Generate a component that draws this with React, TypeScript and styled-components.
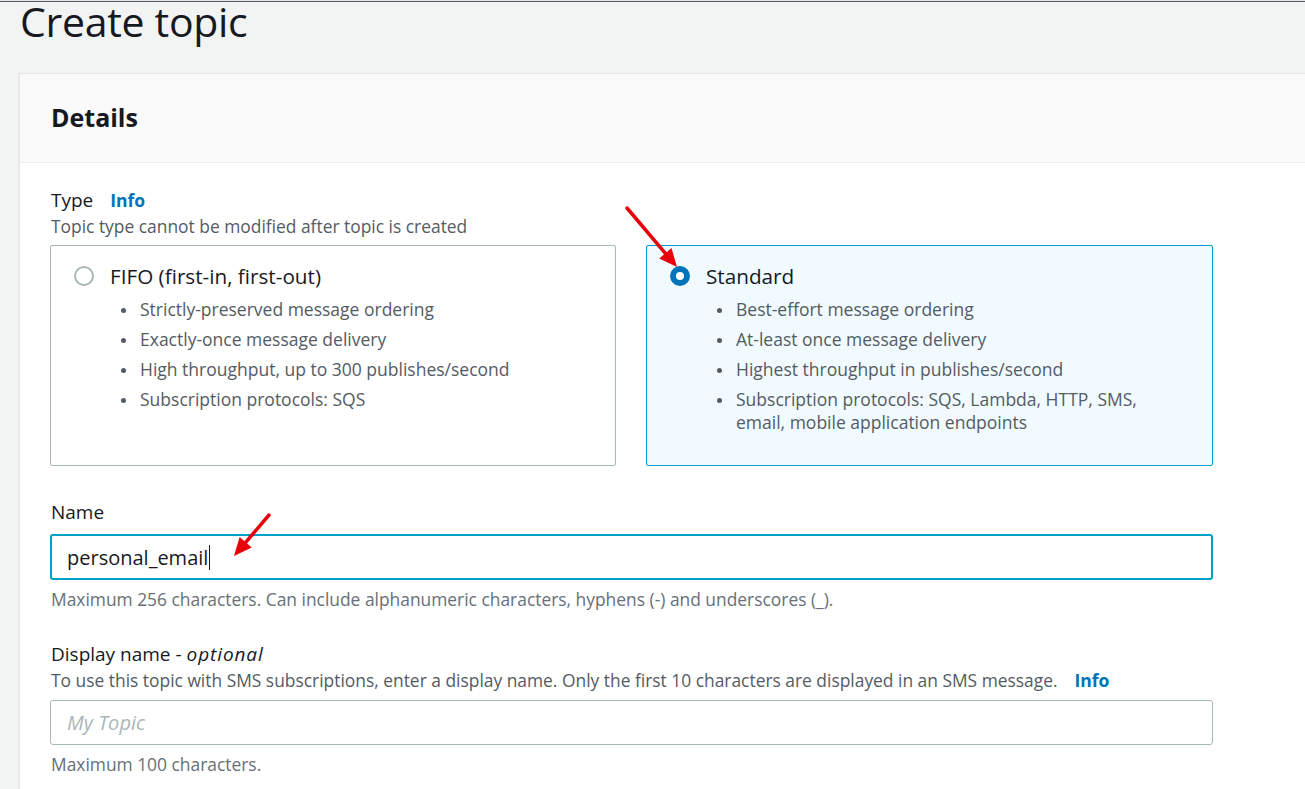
import React from "react";
import styled, { createGlobalStyle } from "styled-components";

const GlobalStyle = createGlobalStyle`
  html, body {
    margin: 0;
    padding: 0;
    background: #f2f3f3;
    overflow: hidden;
  }
  body {
    font-family: "Open Sans", "Noto Sans", Arial, sans-serif;
    color: #16191f;
  }
`;

const Page = styled.div`
  position: relative;
  width: 1305px;
  height: 789px;
  overflow: hidden;
  background: #f2f3f3;
`;

const TopRule = styled.div`
  height: 1px;
  background: #e4e4e4;
  border-bottom: 1px solid #545b64;
`;

const Title = styled.h1`
  margin: 0;
  padding: 0 0 0 20px;
  font-size: 41px;
  font-weight: 400;
  line-height: 38px;
  height: 38px;
  color: #16191f;
  letter-spacing: -0.3px;
  white-space: nowrap;
`;

const Panel = styled.section`
  margin: 33px -40px 0 19px;
  background: #ffffff;
  border: 1px solid #e3e6e6;
  box-shadow: 0 1px 1px rgba(0, 28, 36, 0.15);
`;

const PanelHeader = styled.div`
  background: #fafafa;
  border-bottom: 1px solid #eaeded;
  padding: 28px 30px 29px 31px;
`;

const PanelTitle = styled.h2`
  margin: 0;
  font-size: 25px;
  font-weight: 700;
  line-height: 31px;
  color: #16191f;
`;

const PanelBody = styled.div`
  padding: 25px 30px 40px 30px;
  width: 1163px;
`;

const Label = styled.div<{ $top?: number }>`
  font-size: 19px;
  line-height: 24px;
  height: 24px;
  margin-top: ${(p) => p.$top ?? 0}px;
  padding-left: 1px;
  color: #16191f;
  white-space: nowrap;
`;

const InfoLink = styled.span<{ $gap: number }>`
  color: #0073bb;
  font-weight: 700;
  font-size: 17.5px;
  margin-left: ${(p) => p.$gap}px;
`;

const Optional = styled.i`
  margin-left: 5px;
  letter-spacing: 0.9px;
`;

const Description = styled.div`
  font-size: 17.4px;
  line-height: 22px;
  height: 22px;
  margin-top: 3px;
  padding-left: 1px;
  color: #545b64;
  white-space: nowrap;
`;

const Tiles = styled.div`
  display: grid;
  grid-template-columns: 566px 567px;
  column-gap: 30px;
  margin-top: 8px;
`;

const Tile = styled.div<{ $selected?: boolean }>`
  box-sizing: border-box;
  height: 221px;
  border: 1px solid ${(p) => (p.$selected ? "#00a1c9" : "#aab7b8")};
  background: ${(p) => (p.$selected ? "#f1faff" : "#ffffff")};
  border-radius: 2px;
  padding: 17px 20px 0 23px;
`;

const TileHead = styled.div`
  display: flex;
  align-items: center;
  height: 26px;
`;

const Radio = styled.span<{ $checked?: boolean }>`
  box-sizing: border-box;
  width: 20px;
  height: 20px;
  border-radius: 50%;
  border: ${(p) => (p.$checked ? "6px solid #0073bb" : "2px solid #aab7b8")};
  background: #ffffff;
  flex: none;
`;

const TileLabel = styled.span`
  margin-left: 16px;
  font-size: 20.7px;
  line-height: 26px;
  color: #16191f;
`;

const Bullets = styled.ul`
  margin: 9px 0 0 0;
  padding: 0 0 0 66px;
  list-style: none;
`;

const Bullet = styled.li`
  position: relative;
  font-size: 17.5px;
  line-height: 23px;
  color: #545b64;
  margin-bottom: 7px;
  white-space: nowrap;
  &::before {
    content: "";
    position: absolute;
    left: -19px;
    top: 10px;
    width: 5px;
    height: 5px;
    border-radius: 50%;
    background: #545b64;
  }
`;

const InputBox = styled.div<{ $focused?: boolean }>`
  box-sizing: border-box;
  width: 1163px;
  height: ${(p) => (p.$focused ? 46 : 45)}px;
  margin-top: ${(p) => (p.$focused ? 10 : 9)}px;
  border: ${(p) => (p.$focused ? "2px solid #00a1c9" : "1px solid #aab7b8")};
  border-radius: 3px;
  background: #ffffff;
  display: flex;
  align-items: center;
  padding-left: ${(p) => (p.$focused ? 15 : 16)}px;
  font-size: 20px;
`;

const InputValue = styled.span`
  color: #16191f;
`;

const Caret = styled.span`
  display: inline-block;
  width: 1px;
  height: 25px;
  background: #16191f;
  margin-left: 1px;
`;

const Placeholder = styled.span`
  color: #aab7b8;
  font-style: italic;
`;

const Hint = styled.div`
  font-size: 17.4px;
  line-height: 20px;
  margin-top: 9px;
  padding-left: 1px;
  color: #687078;
  white-space: nowrap;
`;

const Overlay = styled.svg`
  position: absolute;
  left: 0;
  top: 0;
  pointer-events: none;
`;

function Arrow({ x1, y1, x2, y2 }: { x1: number; y1: number; x2: number; y2: number }) {
  const dx = x2 - x1;
  const dy = y2 - y1;
  const len = Math.hypot(dx, dy);
  const ux = dx / len;
  const uy = dy / len;
  const head = 18;
  const half = 8;
  const bx = x2 - ux * head;
  const by = y2 - uy * head;
  const p1 = `${bx - uy * half},${by + ux * half}`;
  const p2 = `${bx + uy * half},${by - ux * half}`;
  return (
    <g>
      <line x1={x1} y1={y1} x2={bx + ux * 2} y2={by + uy * 2} stroke="#e8000b" strokeWidth={3.5} strokeLinecap="round" />
      <polygon points={`${x2},${y2} ${p1} ${p2}`} fill="#e8000b" />
    </g>
  );
}

export default function App() {
  return (
    <Page>
      <GlobalStyle />
      <TopRule />
      <Title>Create topic</Title>
      <Panel>
        <PanelHeader>
          <PanelTitle>Details</PanelTitle>
        </PanelHeader>
        <PanelBody>
          <Label>
            Type<InfoLink $gap={17}>Info</InfoLink>
          </Label>
          <Description>Topic type cannot be modified after topic is created</Description>
          <Tiles>
            <Tile>
              <TileHead>
                <Radio />
                <TileLabel>FIFO (first-in, first-out)</TileLabel>
              </TileHead>
              <Bullets>
                <Bullet>Strictly-preserved message ordering</Bullet>
                <Bullet>Exactly-once message delivery</Bullet>
                <Bullet>High throughput, up to 300 publishes/second</Bullet>
                <Bullet>Subscription protocols: SQS</Bullet>
              </Bullets>
            </Tile>
            <Tile $selected>
              <TileHead>
                <Radio $checked />
                <TileLabel>Standard</TileLabel>
              </TileHead>
              <Bullets>
                <Bullet>Best-effort message ordering</Bullet>
                <Bullet>At-least once message delivery</Bullet>
                <Bullet>Highest throughput in publishes/second</Bullet>
                <Bullet>
                  Subscription protocols: SQS, Lambda, HTTP, SMS,
                  <br />
                  email, mobile application endpoints
                </Bullet>
              </Bullets>
            </Tile>
          </Tiles>
          <Label $top={34}>Name</Label>
          <InputBox $focused>
            <InputValue>personal_email</InputValue>
            <Caret />
          </InputBox>
          <Hint>
            Maximum 256 characters. Can include alphanumeric characters, hyphens (-) and underscores (_).
          </Hint>
          <Label $top={33}>
            Display name -<Optional>optional</Optional>
          </Label>
          <Description>
            To use this topic with SMS subscriptions, enter a display name. Only the first 10 characters are
            displayed in an SMS message.
            <InfoLink $gap={17}>Info</InfoLink>
          </Description>
          <InputBox>
            <Placeholder>My Topic</Placeholder>
          </InputBox>
          <Hint>Maximum 100 characters.</Hint>
        </PanelBody>
      </Panel>
      <Overlay width={1305} height={789} viewBox="0 0 1305 789">
        <Arrow x1={627} y1={208} x2={677} y2={267} />
        <Arrow x1={269} y1={515} x2={234} y2={556} />
      </Overlay>
    </Page>
  );
}
